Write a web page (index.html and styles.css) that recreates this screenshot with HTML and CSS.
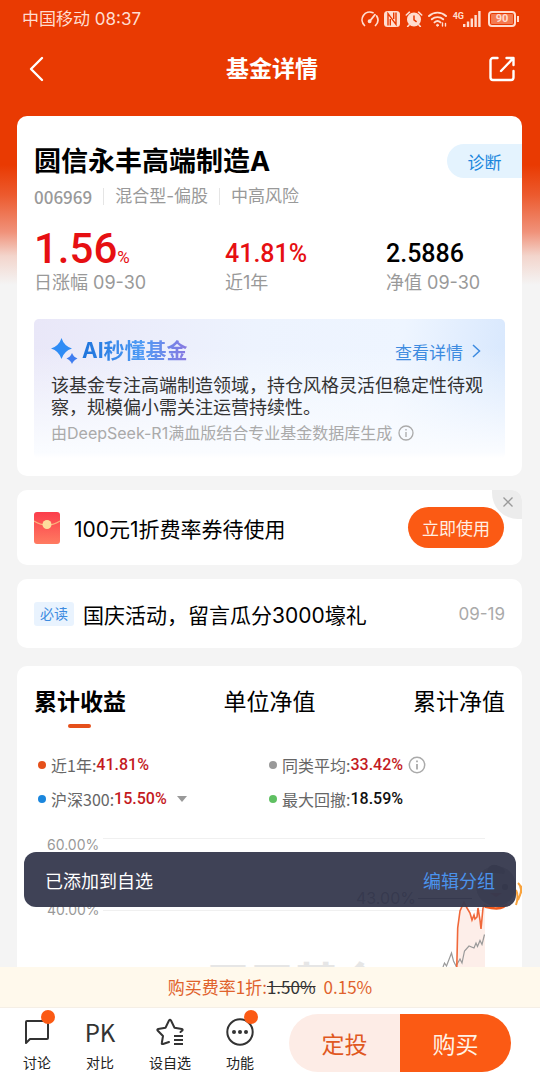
FILE: index.html
```html
<!DOCTYPE html>
<html lang="zh-CN">
<head>
<meta charset="utf-8">
<meta name="viewport" content="width=device-width, initial-scale=1">
<title>基金详情</title>
<link rel="stylesheet" href="styles.css">
</head>
<body>
<div class="app">
  <div class="status">
    <span>中国移动 08:37</span>
    <div class="status-icons">
      <svg width="18" height="16" viewBox="0 0 18 16" fill="none" stroke="currentColor" stroke-width="1.7" stroke-linecap="round"><path d="M3.5 14.5A7.8 7.8 0 0 1 12 1.7M15.7 5a7.8 7.8 0 0 1-1.2 9.5M8.6 10.4 14 3.6"/><circle cx="8.6" cy="10.2" r="1.1"/></svg>
      <svg width="16" height="16" viewBox="0 0 16 16"><rect width="16" height="16" rx="3.5" fill="currentColor"/><path d="M4 14.5V2.6l8 10.8V1.5M6.3 14.5V8M9.7 1.5V8" fill="none" stroke="#e93a02" stroke-width="1.4"/></svg>
      <svg width="18" height="16" viewBox="0 0 18 16"><circle cx="9" cy="8.5" r="7" fill="currentColor"/><path d="M1.3 4 4.4 1.2M16.7 4 13.6 1.2M4 14l-1.3 1.5M14 14l1.3 1.5" stroke="currentColor" stroke-width="1.6" stroke-linecap="round"/><path d="M9 4.500v4.300l2.600 2" fill="none" stroke="#e93a02" stroke-width="1.5"/></svg>
      <svg width="20" height="16" viewBox="0 0 20 16" fill="none" stroke="currentColor" stroke-width="1.9" stroke-linecap="round"><path d="M1 5a12.500 12.500 0 0 1 17 0M3.800 8.300a8.500 8.500 0 0 1 11.400 0M6.500 11.400a4.500 4.500 0 0 1 6 0"/><circle cx="9.5" cy="14.3" r="1" fill="currentColor" stroke-width="1"/><path d="M14.500 12v3M17.500 12.500v2.500" stroke-width="1.4"/></svg>
      <span class="net">4G</span>
      <svg class="bars" width="18" height="16" viewBox="0 0 18 16" fill="currentColor"><rect y="13" width="2.4" height="3"/><rect x="3.8" y="10.5" width="2.4" height="5.5"/><rect x="7.6" y="7.5" width="2.4" height="8.5"/><rect x="11.4" y="4" width="2.4" height="12"/><rect x="15.2" width="2.4" height="16"/></svg>
      <span class="battery"><b>90</b></span>
    </div>
  </div>
  <header class="header">
    <button class="icon-btn" aria-label="返回"><svg width="16" height="26" viewBox="0 0 16 26" fill="none" stroke="#fff" stroke-width="2.4" stroke-linecap="round" stroke-linejoin="round"><path d="M13 2 2 13l11 11"/></svg></button>
    <h1>基金详情</h1>
    <button class="icon-btn" aria-label="分享"><svg width="26" height="26" viewBox="0 0 26 26" fill="none" stroke="#fff" stroke-width="2.4" stroke-linecap="round" stroke-linejoin="round"><path d="M8.500 2H4a2.500 2.500 0 0 0-2.500 2.500v17A2.500 2.500 0 0 0 4 24h18a2.500 2.500 0 0 0 2.500-2.500V15M12 15 24 2.500M17.500 2h7v7"/></svg></button>
  </header>

  <main class="main">
    <section class="card fund">
      <div class="fund-info">
        <div class="fund-head">
          <h2>圆信永丰高端制造A</h2>
          <button class="diagnose">诊断</button>
        </div>
        <div class="meta"><span class="code">006969</span><span>混合型-偏股</span><span>中高风险</span></div>
        <div class="stats">
          <div class="stat"><div class="value big up">1.56<small>%</small></div><div class="label">日涨幅 09-30</div></div>
          <div class="stat"><div class="value up">41.81%</div><div class="label">近1年</div></div>
          <div class="stat"><div class="value">2.5886</div><div class="label">净值 09-30</div></div>
        </div>
      </div>
      <div class="ai">
        <div class="ai-head">
          <svg width="27" height="26" viewBox="0 0 27 26" fill="#2f8cf5"><path d="M10.500 0Q13 8 21 10.500 13 13 10.500 21 8 13 0 10.500 8 8 10.500 0Z"/><path d="M21 15q1.500 4 5.500 5.500-4 1.500-5.500 5.500-1.500-4-5.500-5.500 4-1.500 5.500-5.500Z" fill="#3f7df0"/></svg>
          <h3>AI秒懂基金</h3>
          <a href="#detail">查看详情<svg width="9" height="14" viewBox="0 0 9 14" fill="none" stroke="currentColor" stroke-width="1.5"><path d="m1 1 6.500 6L1 13"/></svg></a>
        </div>
        <p class="ai-text">该基金专注高端制造领域，持仓风格灵活但稳定性待观察，规模偏小需关注运营持续性。</p>
        <p class="ai-source">由DeepSeek-R1满血版结合专业基金数据库生成<svg width="16" height="16" viewBox="0 0 16 16" fill="none" stroke="currentColor" stroke-width="1.3"><circle cx="8" cy="8" r="7"/><path d="M8 7v5M8 4v1.500"/></svg></p>
      </div>
    </section>

    <section class="card coupon">
      <svg width="26" height="32" viewBox="0 0 26 32"><defs><linearGradient id="red" x2="0" y2="1"><stop stop-color="#fb3d4b"/><stop offset="1" stop-color="#ff7b61"/></linearGradient></defs><rect width="26" height="32" rx="3" fill="url(#red)"/><path d="M0 9q13 8 26 0" fill="none" stroke="#fbb07c" stroke-width="1.2"/><circle cx="13" cy="12.5" r="4.5" fill="#fddc9c"/></svg>
      <span class="coupon-text">100元1折费率券待使用</span>
      <button class="use">立即使用</button>
      <button class="close" aria-label="关闭"><svg width="10" height="10" viewBox="0 0 10 10" stroke="#999" stroke-width="1.3"><path d="M.5.5l9 9M9.500.5l-9 9"/></svg></button>
    </section>

    <section class="card notice">
      <span class="tag">必读</span>
      <a href="#notice">国庆活动，留言瓜分3000壕礼</a>
      <time>09-19</time>
    </section>

    <section class="card chart">
      <nav class="tabs">
        <button class="active">累计收益</button><button>单位净值</button><button>累计净值</button>
      </nav>
      <div class="legend">
        <div><i class="dot orange"></i>近1年:<b class="up">41.81%</b></div>
        <div><i class="dot gray"></i>同类平均:<b class="up">33.42%</b><svg class="info" width="18" height="18" viewBox="0 0 18 18" fill="none" stroke="#aaa" stroke-width="1.5"><circle cx="9" cy="9" r="7.7"/><path d="M9 8v5.500M9 4.500v1.800" stroke-width="1.8"/></svg></div>
        <div><i class="dot blue"></i>沪深300:<b class="up">15.50%</b><svg class="caret" width="10" height="6" viewBox="0 0 10 6"><path d="M0 0h10L5 6z" fill="#999"/></svg></div>
        <div><i class="dot green"></i>最大回撤:<b>18.59%</b></div>
      </div>
      <svg class="plot" viewBox="17 830 505 150">
        <path d="M103 838.500h382M103 910.500h382" stroke="#f0f0f0"/>
        <g class="axis"><text x="47" y="850">60.00%</text><text x="47" y="915">40.00%</text></g>
        <text class="mark" x="206" y="1000">天天基金</text>
        <path d="M457 980 457.700 928 460 911 464 902 467 908 470 913 472 920 474 915 475 919 477 917 478 908 480 920 481 929 483 908 485 905V980Z" fill="#fdeee9"/>
        <path d="M443 967l1.500-4 2 3 5-13 2 8 2.500 5 4-7 2 4 2.500-12 4.500-5 5 2 2-5 1.500 3.500 2.500-6 2 4 2.500-10" fill="none" stroke="#999" stroke-width="1.2"/>
        <path d="M456.500 980 457.700 928 460 911 464 902 467 908 470 913 472 920 474 915 475 919 477 917 478 908 480 920 481 929 483 908 485 905" fill="none" stroke="#f0683a" stroke-width="1.6"/>
        <text class="peak" x="356" y="904">43.00%</text><path d="M418 898.500h54" stroke="#223"/>
        <circle cx="496" cy="886" r="20" fill="#777"/><path d="M487 872q2-10 12-6 8 3 5 8" fill="#333"/><circle cx="486" cy="887" r="3"/><circle cx="505" cy="887" r="3"/><path d="M490 893h12l-6 4z" fill="#722"/>
        <path d="M484 904q12 7 24-1-3 10-23 5Z" fill="#f05a1c"/><path d="M516 890q3 6 0 15M518 883q6 5 0 17M521 886q2 3 0 7" fill="none" stroke="#f9a33c" stroke-width="2"/>
      </svg>
    </section>

    <div class="toast" role="status"><span>已添加到自选</span><a href="#group">编辑分组</a></div>
  </main>

  <footer class="dock">
    <div class="fee">购买费率1折:<s>1.50%</s><span>0.15%</span></div>
    <div class="actions">
      <button class="item"><span class="ic"><svg width="26" height="26" viewBox="0 0 26 26" fill="none" stroke="#333" stroke-width="2" stroke-linejoin="round"><path d="M2 24V3q0-1 1-1h20q1 0 1 1v16q0 1-1 1H6Z"/></svg><i class="badge"></i></span>讨论</button>
      <button class="item"><span class="ic pk">PK</span>对比</button>
      <button class="item"><span class="ic"><svg width="28" height="28" viewBox="0 0 28 28" fill="none" stroke="#333" stroke-width="2" stroke-linejoin="round" stroke-linecap="round"><path d="M13 24 7 26q-1.500.5-1.200-1L7 18 1.600 12.500Q.8 11.400 2.200 11L9.500 9.700 13 2.500q1-1.500 2 0l3.500 7.200 7.300 1.300q1.400.4.500 1.500L24.500 14"/><path d="M18 18h9M18 22h9M18 26h9" stroke-linecap="butt"/></svg></span>设自选</button>
      <button class="item"><span class="ic"><svg width="28" height="28" viewBox="0 0 28 28" fill="#333"><circle cx="14" cy="14" r="12.7" fill="none" stroke="#333" stroke-width="2"/><circle cx="8" cy="14" r="2"/><circle cx="14" cy="14" r="2"/><circle cx="20" cy="14" r="2"/></svg><i class="badge"></i></span>功能</button>
      <div class="buy"><button class="plan">定投</button><button class="purchase">购买</button></div>
    </div>
  </footer>
</div>
</body>
</html>
```

FILE: styles.css
```css
* { box-sizing: border-box; margin: 0; padding: 0; }
body { font-family: Inter, "Noto Sans CJK SC", sans-serif; color: #000; background: #f4f4f4; }
button { border: 0; background: none; font: inherit; color: inherit; cursor: pointer; }
a { text-decoration: none; color: inherit; }
svg { display: block; flex: none; }

.app {
  height: 100vh;
  display: flex;
  flex-direction: column;
  overflow: hidden;
  background: linear-gradient(#e93a02 0 165px, #ec5a2e 195px, #f0927a 232px, #f3d5cc 256px, #f4f4f4 285px);
}

.status {
  height: 38px;
  padding: 0 21px 0 22px;
  display: flex;
  align-items: center;
  justify-content: space-between;
  font-size: 17px;
  line-height: 38px;
  color: #ffddd0;
}
.status-icons { display: flex; align-items: center; gap: 5px; }
.net { font: bold 9px/10px Roboto, sans-serif; align-self: flex-start; }
.bars { margin-left: -6px; }
.battery {
  position: relative;
  width: 28px;
  height: 16px;
  border: 2px solid currentColor;
  border-radius: 4px;
  padding: 1px;
  display: flex;
  margin: 0 3px 0 2px;
}
.battery b { flex: 1; background: #f47a50; font: bold 11px/10px Roboto, sans-serif; text-align: center; border-radius: 1px; }
.battery::after { content: ""; position: absolute; right: -5px; top: 3px; width: 2px; height: 6px; background: currentColor; }

.header { display: flex; align-items: center; justify-content: space-between; height: 62px; padding: 0 25px 0 29px; }
.header h1 { font-size: 23px; line-height: 32px; color: #fff; }
.icon-btn { width: 26px; height: 26px; }

.main { flex: 1; min-height: 0; position: relative; overflow: hidden; padding: 16px 18px 0 17px; }
.card { background: #fff; border-radius: 10px; }

.fund { padding-bottom: 18px; margin-bottom: 14px; }
.fund-info { height: 203px; padding: 27px 0 0 17px; }
.fund-head { display: flex; align-items: center; justify-content: space-between; height: 36px; }
.fund-head h2 { font-size: 27px; line-height: 36px; padding-top: 2px; }
.diagnose { width: 75px; height: 34px; border-radius: 17px 0 0 17px; background: #e4f3fe; color: #1a86dd; font-size: 17px; }
.meta { display: flex; align-items: center; height: 34px; font-size: 17px; color: #999; }
.meta span + span { border-left: 1px solid #e5e5e5; line-height: 17px; padding-left: 11px; margin-left: 11px; }
.code { font-family: "Noto Sans CJK SC", sans-serif; font-weight: 500; font-size: 17px; }
.stats { display: grid; grid-template-columns: 191fr 161fr 136fr; align-items: end; height: 82px; }
.value { font: 500 25px/34px Roboto, sans-serif; }
.value.big { font-size: 42px; line-height: 44px; }
.value small { font-size: 17px; line-height: 17px; font-weight: normal; }
.up { color: #e60f12; }
.label { font-size: 18px; line-height: 24px; color: #999; }

.ai {
  margin: 0 17px;
  padding: 18px 8px 0 17px;
  height: 139px;
  border-radius: 5px;
  background:
    linear-gradient(rgba(255, 255, 255, 0) 20%, #fafcff 96%, #fff),
    linear-gradient(100deg, #e9e7f8, #edf3fe 45%, #eef5ff 75%, #d5e6fd);
}
.ai-head { display: flex; align-items: center; height: 28px; }
.ai-head h3 {
  flex: 1;
  margin-left: 4px;
  font-size: 21px;
  line-height: 28px;
  color: transparent;
  background: linear-gradient(90deg, #1e74dc, #4f9bf5 60px, #8a78e0 106px) text;
  -webkit-background-clip: text;
}
.ai-head a { display: flex; align-items: center; gap: 9px; font-size: 17px; color: #3d8be0; margin-right: 16px; }
.ai-text { font-size: 18px; line-height: 22px; color: #333; margin-top: 10px; }
.ai-source { display: flex; align-items: center; gap: 6px; margin-top: 2px; font-size: 16px; line-height: 24px; color: #aaa; white-space: nowrap; }

.coupon { position: relative; overflow: hidden; display: flex; align-items: center; height: 75px; padding: 0 18px 0 17px; margin-bottom: 14px; }
.coupon-text { flex: 1; margin-left: 14px; font-size: 21px; }
.use { width: 96px; height: 41px; border-radius: 21px; background: #fb5a14; color: #fff0e4; font-size: 17px; }
.close { position: absolute; right: 0; top: 0; width: 30px; height: 29px; padding: 0 0 5px 2px; border-bottom-left-radius: 26px; background: #ececec; display: flex; align-items: center; justify-content: center; }

.notice { display: flex; align-items: center; height: 69px; padding: 0 17px; margin-bottom: 18px; }
.tag { width: 40px; height: 24px; border-radius: 3px; background: #e9f3fe; color: #3d8be0; font-size: 14px; line-height: 24px; text-align: center; }
.notice a { flex: 1; margin-left: 9px; font-size: 21px; white-space: nowrap; }
.notice time { font-size: 17px; color: #aaa; }

.chart { padding-top: 18px; }
.tabs { display: flex; justify-content: space-between; padding: 0 17px; }
.tabs button { position: relative; font-size: 23px; line-height: 36px; }
.tabs .active { font-weight: bold; }
.tabs .active::after { content: ""; position: absolute; left: 50%; bottom: -8px; width: 23px; height: 4px; margin-left: -12px; border-radius: 2px; background: #e5501b; }
.legend { display: grid; grid-template-columns: 231fr 232fr; padding: 28px 21px 0; font-family: "Noto Sans CJK SC", sans-serif; font-size: 16px; line-height: 34px; color: #666; }
.legend div { display: flex; align-items: center; }
.legend b { font-family: Roboto, sans-serif; font-weight: 500; }
.legend b:not(.up) { color: #111; }
.legend .up { color: #c41a1e; }
.dot { width: 8px; height: 8px; border-radius: 50%; margin-right: 5px; }
.orange { background: #e5501b; }
.gray { background: #999; }
.blue { background: #1a86dd; }
.green { background: #5fc062; }
.info { margin-left: 5px; }
.caret { margin-left: 10px; }
.plot { width: 100%; margin-top: 14px; }
.axis { font-size: 14px; fill: #999; }
.mark { font-size: 44px; font-weight: bold; fill: #e6e6e6; }
.peak { font-size: 16px; fill: #223; }

.toast {
  position: absolute;
  left: 24px;
  right: 24px;
  bottom: 60px;
  height: 55px;
  padding: 0 21px;
  display: flex;
  align-items: center;
  justify-content: space-between;
  border-radius: 12px;
  background: rgba(55, 58, 79, 0.96);
  color: #fff;
  font-size: 18px;
}
.toast a { color: #4b93ec; }

.dock { background: #fff; }
.fee { height: 41px; line-height: 40px; text-align: center; font-family: "Noto Sans CJK SC", sans-serif; font-size: 17px; background: #fff9ec; color: #e0622c; border-bottom: 1px solid #f5efe6; }
.fee s { color: #333; }
.fee span { margin-left: 8px; }
.actions { display: flex; align-items: center; gap: 35px; height: 72px; padding: 0 29px 2px 23px; }
.item { flex: none; display: flex; flex-direction: column; align-items: center; font-size: 14px; line-height: 20px; color: #222; white-space: nowrap; }
.ic { position: relative; height: 36px; width: 28px; display: flex; align-items: center; justify-content: center; margin-bottom: 3px; }
.pk { font-family: "Noto Sans CJK SC", sans-serif; font-size: 24px; line-height: 36px; color: #333; }
.badge { position: absolute; right: -4px; top: -4px; width: 14px; height: 14px; border-radius: 50%; background: #fb5a14; }
.buy { flex: 1; display: flex; height: 58px; border-radius: 29px; overflow: hidden; font-size: 23px; }
.buy button { flex: 1; }
.plan { background: #fdece6; color: #e0581f; }
.purchase { background: #fb5a14; color: #fff3e6; }
```
